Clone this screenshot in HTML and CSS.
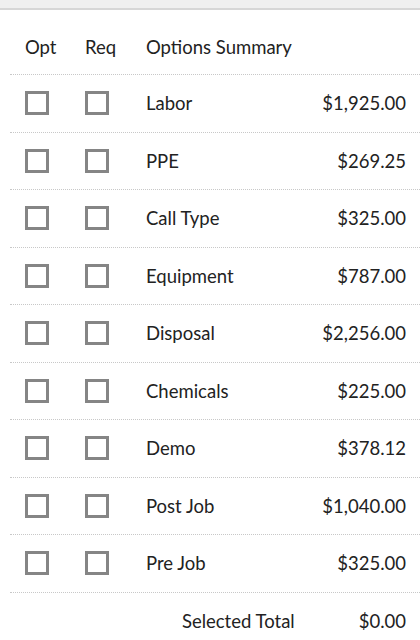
FILE: index.html
```html
<html>
<head>
  <title>Options Summary</title>
  <meta name="viewport" content="width=device-width, initial-scale=1.0">
  <link rel="stylesheet" href="styles.css">
</head>
<body>
  <div class="topbar"></div>

  <div class="summary">
    <div class="row head">
      <span>Opt</span>
      <span>Req</span>
      <span>Options Summary</span>
      <span></span>
    </div>

    <div class="row"><input type="checkbox" class="box"><input type="checkbox" class="box"><span>Labor</span><span class="amt">$1,925.00</span></div>
    <div class="row"><input type="checkbox" class="box"><input type="checkbox" class="box"><span>PPE</span><span class="amt">$269.25</span></div>
    <div class="row"><input type="checkbox" class="box"><input type="checkbox" class="box"><span>Call Type</span><span class="amt">$325.00</span></div>
    <div class="row"><input type="checkbox" class="box"><input type="checkbox" class="box"><span>Equipment</span><span class="amt">$787.00</span></div>
    <div class="row"><input type="checkbox" class="box"><input type="checkbox" class="box"><span>Disposal</span><span class="amt">$2,256.00</span></div>
    <div class="row"><input type="checkbox" class="box"><input type="checkbox" class="box"><span>Chemicals</span><span class="amt">$225.00</span></div>
    <div class="row"><input type="checkbox" class="box"><input type="checkbox" class="box"><span>Demo</span><span class="amt">$378.12</span></div>
    <div class="row"><input type="checkbox" class="box"><input type="checkbox" class="box"><span>Post Job</span><span class="amt">$1,040.00</span></div>
    <div class="row"><input type="checkbox" class="box"><input type="checkbox" class="box"><span>Pre Job</span><span class="amt">$325.00</span></div>

    <div class="total">
      <span>Selected Total</span>
      <span class="amt">$0.00</span>
    </div>
  </div>
</body>
</html>
```

FILE: styles.css
```css
body {
  margin: 0;
  background-color: white;
  color: #222;
  font-family: Lato, "Noto Sans", sans-serif;
  font-size: 18.5px;
  overflow: hidden;
}

.topbar {
  height: 8px;
  background-color: #efefef;
  border-bottom: 2px solid #d6d6d6;
}

.summary {
  margin-left: 10px;
}

.row {
  display: grid;
  grid-template-columns: 60px 60px 1fr auto;
  align-items: center;
  height: 57.5px;
  box-sizing: border-box;
  border-bottom: 1px dotted #c8c8c8;
  padding-right: 14px;
}

.row > :first-child,
.row > :nth-child(2) {
  margin-left: 15px;
}

.row > :nth-child(3) {
  padding-left: 16px;
}

.head {
  height: 65px;
  align-items: start;
  padding-top: 25px;
  line-height: 24px;
}

.box {
  appearance: none;
  -webkit-appearance: none;
  width: 24px;
  height: 24px;
  margin: 0 0 0 15px;
  box-sizing: border-box;
  border: 3px solid #858585;
  background-color: white;
}

.amt {
  text-align: right;
}

.total {
  display: flex;
  justify-content: flex-end;
  align-items: center;
  gap: 64px;
  height: 57.5px;
  padding-right: 14px;
}
```
